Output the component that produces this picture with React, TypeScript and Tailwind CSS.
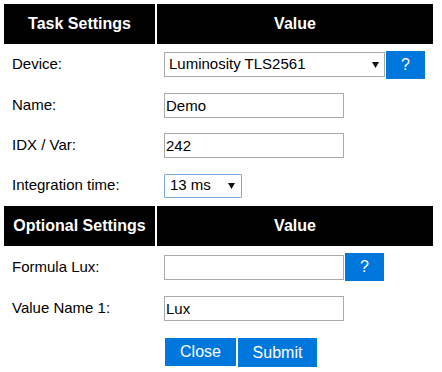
import React from "react";

const font = { fontFamily: '"Liberation Sans", Arial, sans-serif' };

function Arrow() {
    return (
        <svg width="7" height="6" viewBox="0 0 7 6" className="shrink-0">
            <path d="M0 0 L7 0 L3.5 6 Z" fill="#111" />
        </svg>
    );
}

function Header({ left }: { left: string }) {
    return (
        <>
            <div className="h-[40px] bg-black text-white font-bold text-[16px] flex items-center justify-center">{left}</div>
            <div className="h-[40px] bg-black text-white font-bold text-[16px] flex items-center justify-center">Value</div>
        </>
    );
}

function Label({ text, h }: { text: string; h: string }) {
    return <div className={`${h} flex items-center pl-[8px] text-[15px] text-black`}>{text}</div>;
}

function TextBox({ value }: { value: string }) {
    return (
        <input
            readOnly
            value={value}
            className="w-[180px] h-[25px] border border-[#a9a9a9] px-[1px] text-[15px] text-black bg-white outline-none"
            style={font}
        />
    );
}

function HelpButton() {
    return (
        <button className="w-[39px] h-[28px] bg-[#0077dd] text-white text-[16px] flex items-center justify-center">?</button>
    );
}

export default function App() {
    return (
        <div className="bg-white w-[442px] h-[372px] pl-[4px] pt-[4px]" style={font}>
            <div className="grid grid-cols-[151px_276px] gap-x-[2px]">
                <Header left="Task Settings" />

                {/* device */}
                <Label text="Device:" h="h-[41px]" />
                <div className="h-[41px] flex items-center pl-[7px] gap-[1px]">
                    <div className="w-[221px] h-[25px] border border-[#a9a9a9] flex items-center justify-between pl-[4px] pr-[5px] text-[15px] text-black">
                        <span>Luminosity TLS2561</span>
                        <Arrow />
                    </div>
                    <HelpButton />
                </div>

                <Label text="Name:" h="h-[40px]" />
                <div className="h-[40px] flex items-center pl-[7px]">
                    <TextBox value="Demo" />
                </div>

                <Label text="IDX / Var:" h="h-[40px]" />
                <div className="h-[40px] flex items-center pl-[7px]">
                    <TextBox value="242" />
                </div>

                <Label text="Integration time:" h="h-[41px]" />
                <div className="h-[41px] flex items-center pl-[7px]">
                    <div className="w-[78px] h-[24px] border border-[#7aa7e0] rounded-[1px] flex items-center justify-between pl-[5px] pr-[6px] text-[15px] text-black">
                        <span>13 ms</span>
                        <Arrow />
                    </div>
                </div>

                <Header left="Optional Settings" />

                <Label text="Formula Lux:" h="h-[42px]" />
                <div className="h-[42px] flex items-center pl-[7px] gap-[1px]">
                    <TextBox value="" />
                    <HelpButton />
                </div>

                <Label text="Value Name 1:" h="h-[41px]" />
                <div className="h-[41px] flex items-center pl-[7px]">
                    <TextBox value="Lux" />
                </div>

                <div />
                <div className="flex pl-[8px] pt-[9px] gap-[2px]">
                    <button className="w-[71px] h-[28px] bg-[#0077dd] text-white text-[16px]">Close</button>
                    <button className="w-[79px] h-[29px] bg-[#0077dd] text-white text-[16px]">Submit</button>
                </div>
            </div>
        </div>
    );
}
